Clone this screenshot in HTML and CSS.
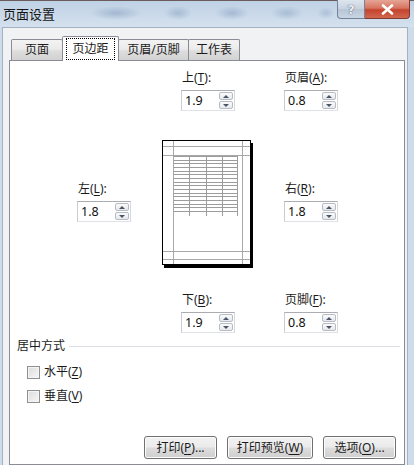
FILE: index.html
```html
<!DOCTYPE html>
<html lang="zh-CN">
<head>
<meta charset="utf-8">
<title>页面设置</title>
<link rel="stylesheet" href="styles.css">
</head>
<body>
<div class="window">
  <header class="titlebar">
    <span class="title">页面设置</span>
    <div class="caption-buttons">
      <button class="cap help" type="button">?</button>
      <button class="cap close" type="button">
        <svg width="13" height="11" viewBox="0 0 13 11"><path d="M2 1.5 L11 9.5 M11 1.5 L2 9.5" stroke="#fff" stroke-width="2.6" stroke-linecap="round"/></svg>
      </button>
    </div>
  </header>

  <main class="dialog">
    <nav class="tabs">
      <div class="tab w1">页面</div>
      <div class="tab active w2"><span class="focus">页边距</span></div>
      <div class="tab w3">页眉/页脚</div>
      <div class="tab w4">工作表</div>
    </nav>

    <section class="panel">
      <div class="margins">
        <div class="field f-top">
          <label class="lbl">上(<u>T</u>):</label>
          <div class="spin"><span class="val">1.9</span><span class="arrows"><i class="up"></i><i class="down"></i></span></div>
        </div>
        <div class="field f-header">
          <label class="lbl">页眉(<u>A</u>):</label>
          <div class="spin"><span class="val">0.8</span><span class="arrows"><i class="up"></i><i class="down"></i></span></div>
        </div>

        <div class="field f-left">
          <label class="lbl">左(<u>L</u>):</label>
          <div class="spin"><span class="val">1.8</span><span class="arrows"><i class="up"></i><i class="down"></i></span></div>
        </div>
        <svg class="preview" width="94" height="128" viewBox="0 0 94 128">
          <rect x="4" y="3" width="89" height="125" fill="#000"/>
          <rect x="2.5" y="0.5" width="88" height="124" fill="#fff" stroke="#000"/>
          <g stroke="#a8a8a8" stroke-width="1">
            <path d="M13.5 1 V124 M82.5 1 V124 M3 6.5 H90 M3 15.5 H90 M3 111.5 H90 M3 119.5 H90"/>
          </g>
          <g stroke="#9c9c9c" stroke-width="1">
            <path d="M29.5 16 V76 M46.5 16 V76 M62.5 16 V76 M77.5 16 V76"/>
            <path d="M13.5 16.5 H77.5 M13.5 20.5 H77.5 M13.5 23.5 H77.5 M13.5 27.5 H77.5 M13.5 31.5 H77.5 M13.5 34.5 H77.5 M13.5 38.5 H77.5 M13.5 42.5 H77.5 M13.5 45.5 H77.5 M13.5 49.5 H77.5 M13.5 53.5 H77.5 M13.5 56.5 H77.5 M13.5 60.5 H77.5 M13.5 64.5 H77.5 M13.5 67.5 H77.5 M13.5 71.5 H77.5"/>
          </g>
        </svg>
        <div class="field f-right">
          <label class="lbl">右(<u>R</u>):</label>
          <div class="spin"><span class="val">1.8</span><span class="arrows"><i class="up"></i><i class="down"></i></span></div>
        </div>

        <div class="field f-bottom">
          <label class="lbl">下(<u>B</u>):</label>
          <div class="spin"><span class="val">1.9</span><span class="arrows"><i class="up"></i><i class="down"></i></span></div>
        </div>
        <div class="field f-footer">
          <label class="lbl">页脚(<u>F</u>):</label>
          <div class="spin"><span class="val">0.8</span><span class="arrows"><i class="up"></i><i class="down"></i></span></div>
        </div>
      </div>

      <div class="group">
        <div class="group-title"><span>居中方式</span></div>
        <label class="check"><span class="box"></span><span>水平(<u>Z</u>)</span></label>
        <label class="check"><span class="box"></span><span>垂直(<u>V</u>)</span></label>
      </div>

      <div class="actions">
        <button class="btn b-print" type="button">打印(<u>P</u>)...</button>
        <button class="btn b-preview" type="button">打印预览(<u>W</u>)</button>
        <button class="btn b-options" type="button">选项(<u>O</u>)...</button>
      </div>
    </section>
  </main>
</div>
</body>
</html>
```

FILE: styles.css
```css
* { box-sizing: border-box; }

html, body {
  margin: 0;
  padding: 0;
}

body {
  width: 414px;
  height: 465px;
  overflow: hidden;
  background: #cddbea;
  font: 12px/16px "Noto Sans", "Noto Sans CJK SC", sans-serif;
  color: #1b1b1b;
}

u { text-decoration: underline; text-underline-offset: 2px; }

.window {
  display: flex;
  flex-direction: column;
  height: 100%;
}

/* ---- caption bar (aero glass) ---- */
.titlebar {
  flex: none;
  height: 27px;
  display: flex;
  align-items: center;
  padding: 0 4px 0 3px;
  border-top: 1px solid #6e5c5c;
  background:
    radial-gradient(ellipse 26px 7px at 116px 12px, rgba(98,128,168,.38), transparent),
    radial-gradient(ellipse 14px 7px at 178px 12px, rgba(98,128,168,.34), transparent),
    radial-gradient(ellipse 17px 7px at 232px 12px, rgba(98,128,168,.36), transparent),
    radial-gradient(ellipse 16px 7px at 287px 12px, rgba(98,128,168,.32), transparent),
    radial-gradient(ellipse 9px 6px at 326px 12px, rgba(98,128,168,.28), transparent),
    linear-gradient(#bfd1e5, #cbdaea 55%, #d4e1ee);
}

.title {
  font-size: 13px;
  color: #151515;
  letter-spacing: 0;
}

.caption-buttons {
  margin-left: auto;
  align-self: flex-start;
  display: flex;
  margin-top: -1px;
}

.cap {
  height: 19px;
  padding: 0;
  margin: 0;
  display: flex;
  align-items: center;
  justify-content: center;
  font: bold 13px/1 "DejaVu Sans", sans-serif;
}

.help {
  width: 28px;
  border: 1px solid #738399;
  border-top: none;
  border-radius: 0 0 0 4px;
  background: linear-gradient(#dde5ee, #c7d2df 50%, #b8c5d5 51%, #c9d5e2);
  color: #e9eef4;
  text-shadow: 0 0 1px #55657a, 0 0 1px #55657a;
}

.close {
  width: 45px;
  border: 1px solid #85392e;
  border-top: none;
  border-left: none;
  border-radius: 0 0 4px 0;
  background: linear-gradient(#e6a595, #d77461 45%, #c4432e 55%, #d0674e);
}

/* ---- dialog body ---- */
.dialog {
  flex: 1;
  margin: 0 6px 0 2px;
  border: 1px solid #a5b1c0;
  border-bottom: none;
  background: #f1f2f3;
  padding: 8px 2px 0 6px;
  display: flex;
  flex-direction: column;
}

.tabs {
  display: flex;
  align-items: flex-end;
  height: 25px;
  padding-left: 2px;
  margin-bottom: -1px;
  position: relative;
  z-index: 1;
}

.tab {
  height: 21px;
  margin: 0 -1px 1px 0;
  border: 1px solid #898c95;
  border-bottom: none;
  border-radius: 2px 2px 0 0;
  background: linear-gradient(#f3f3f3, #ebebeb 45%, #dddddd 55%, #d2d2d2);
  display: flex;
  align-items: center;
  justify-content: center;
  color: #1b1b1b;
}

.w1 { width: 52px; }
.w2 { width: 57px; }
.w3 { width: 71px; }
.w4 { width: 52px; }

.tab.active {
  height: 25px;
  margin-bottom: 0;
  background: #fff;
  position: relative;
  z-index: 2;
  align-items: flex-start;
  padding-top: 1px;
}

.focus {
  border: 1px dotted #000;
  padding: 2px 5px;
}

.panel {
  flex: 1;
  background: #fff;
  border: 1px solid #898c95;
  padding: 9px 2px 0 0;
  display: flex;
  flex-direction: column;
}

/* ---- margin fields around the page preview ---- */
.margins {
  display: grid;
  grid-template-columns: 83px 124px 55px;
  margin-left: 67px;
}

.field {
  display: flex;
  flex-direction: column;
  gap: 4px;
}

.lbl {
  line-height: 16px;
  padding-left: 1px;
}

.f-top    { grid-column: 2; grid-row: 1; margin-left: 21px; }
.f-header { grid-column: 3; grid-row: 1; }
.f-left   { grid-column: 1; grid-row: 2; align-self: center; }
.preview  { grid-column: 2; grid-row: 2; margin: 29px 0 24px; display: block; }
.f-right  { grid-column: 3; grid-row: 2; align-self: center; }
.f-bottom { grid-column: 2; grid-row: 3; margin-left: 21px; }
.f-footer { grid-column: 3; grid-row: 3; }

.spin {
  width: 54px;
  height: 21px;
  border: 1px solid #abadb3;
  border-color: #abadb3 #d6d9de #dfe3e8 #c9ccd2;
  display: flex;
  align-items: center;
  justify-content: space-between;
  padding: 0 1px 0 3px;
  background: #fff;
}

.val {
  font-family: "Noto Sans", sans-serif;
  font-size: 12.5px;
  color: #111;
}

.arrows {
  display: flex;
  flex-direction: column;
  gap: 1px;
  width: 14px;
}

.arrows i {
  height: 8px;
  border: 1px solid #b7bcc4;
  border-radius: 2px;
  background: linear-gradient(#fbfbfb, #e6e8eb);
  display: flex;
  align-items: center;
  justify-content: center;
}

.arrows i::before {
  content: "";
  border-left: 3px solid transparent;
  border-right: 3px solid transparent;
}

.arrows .up::before { border-bottom: 3px solid #4a5566; }
.arrows .down::before { border-top: 3px solid #4a5566; }

/* ---- centering group ---- */
.group {
  margin-top: 5px;
  display: flex;
  flex-direction: column;
  gap: 8px;
}

.group-title {
  display: flex;
  align-items: center;
  padding-left: 7px;
  margin-bottom: 2px;
}

.group-title::after {
  content: "";
  flex: 1;
  height: 1px;
  margin: 1px 2px 0 4px;
  background: #dcdfe3;
}

.check {
  display: flex;
  align-items: center;
  gap: 4px;
  padding-left: 17px;
  line-height: 16px;
}

.box {
  width: 13px;
  height: 13px;
  border: 1px solid #8f8f8f;
  background: linear-gradient(135deg, #dcdcdc, #f6f6f6);
  box-shadow: inset 0 0 0 1px #f4f4f4;
}

/* ---- command buttons ---- */
.actions {
  margin-top: 32px;
  display: flex;
  justify-content: flex-end;
  gap: 10px;
  padding-right: 6px;
}

.btn {
  height: 23px;
  padding: 0;
  border: 1px solid #707070;
  border-radius: 3px;
  background: linear-gradient(#f2f2f2, #ebebeb 49%, #dddddd 51%, #cfcfcf);
  box-shadow: inset 0 0 0 1px #fcfcfc;
  font: 12px/16px "Noto Sans", "Noto Sans CJK SC", sans-serif;
  color: #1b1b1b;
}

.b-print   { width: 73px; }
.b-preview { width: 86px; }
.b-options { width: 73px; }
```
